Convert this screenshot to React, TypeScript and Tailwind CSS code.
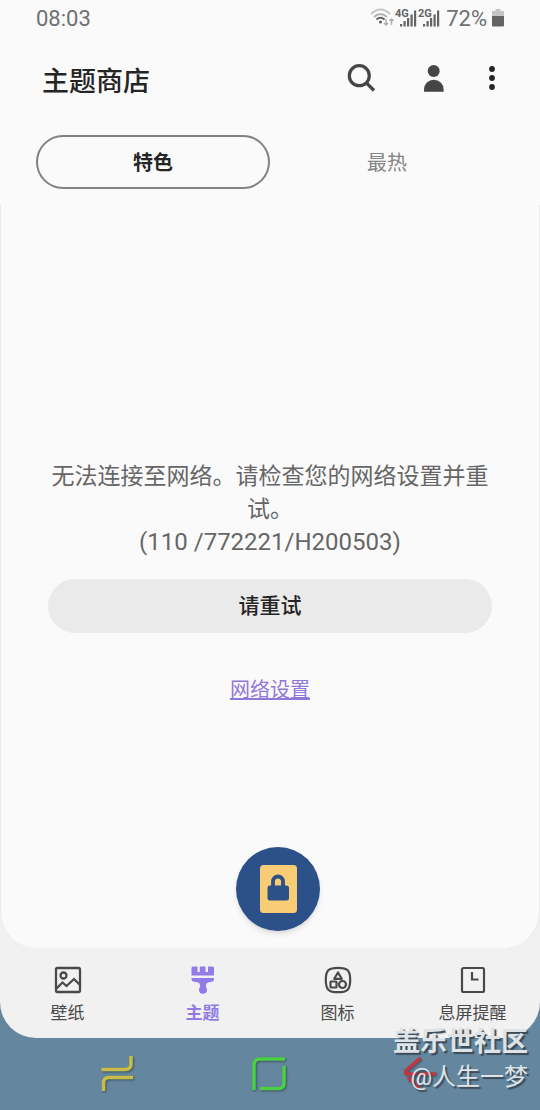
import { useState } from 'react'
import type { ReactNode } from 'react'
import clsx from 'clsx'

const tabs = ['特色', '最热']

function WifiIcon() {
    return (
        <svg viewBox="0 0 25 20" className="h-5 w-[25px]" fill="none" aria-hidden="true">
            <path d="M1 6Q10.500 -3 20 6" stroke="#c4c4c4" strokeWidth="2" />
            <path d="M4 9Q10.500 3 17 9" stroke="#b4b4b4" strokeWidth="2" />
            <path d="M6.500 11.500Q10.500 8 14.500 11.500" stroke="#5f5f5f" strokeWidth="2" />
            <circle cx="10.5" cy="14" r="1.5" fill="#5f5f5f" />
            <path d="M16 11v6M14 15l2 2 2-2M21.500 17v-6M19.500 13l2-2 2 2" stroke="#b0b0b0" strokeWidth="1.5" />
        </svg>
    )
}

function SignalIcon({ label }: { label: string }) {
    return (
        <svg viewBox="0 0 23 20" className="h-5 w-[23px]" fill="#646464" role="img" aria-label={label}>
            <path d="M5 16h2.200v2.500H5zM8.500 13h2.200v5.500H8.500zM12 10h2.200v8.500H12zM15.500 6.500h2.200v12h-2.200zM19 2.500h2.200v16H19z" />
            <text x="0" y="9" className="font-['Roboto',sans-serif] text-[11px] font-bold" stroke="#fafafa" strokeWidth="1" paintOrder="stroke">
                {label}
            </text>
        </svg>
    )
}

function BatteryIcon() {
    return (
        <svg viewBox="0 0 12 19" className="h-[19px] w-3" aria-hidden="true">
            <path d="M3.500 0h5v2H12v5.500H0V2h3.500z" fill="#c4c4c4" />
            <path d="M0 7h12v9.500a1 1 0 0 1-1 1H1a1 1 0 0 1-1-1z" fill="#646464" />
        </svg>
    )
}

function StatusBar() {
    return (
        <div className="flex h-9 items-center justify-between px-9 font-['Roboto',sans-serif] text-[22px] text-[#707070]">
            <span>08:03</span>
            <div className="flex items-center">
                <WifiIcon />
                <SignalIcon label="4G" />
                <SignalIcon label="2G" />
                <span className="mx-[5px]">72%</span>
                <BatteryIcon />
            </div>
        </div>
    )
}

function WallpaperIcon() {
    return (
        <svg viewBox="0 0 28 28" className="size-7" fill="none" stroke="currentColor" strokeWidth="2.3" aria-hidden="true">
            <rect x="2" y="2" width="24" height="24" rx="1.5" />
            <circle cx="9.5" cy="9.5" r="3" />
            <path d="M2.500 22.500l6-6 4 3.500 7.500-7 6 6" />
        </svg>
    )
}

function BrushIcon() {
    return (
        <svg viewBox="0 0 28 28" className="size-7" fill="currentColor" aria-hidden="true">
            <path d="M2.500 9.500V2Q2.500 .5 4 .5H8.500V6H10.800V.5H16.500V6H19V.5H23.500Q25 .5 25 2V9.500z" />
            <path d="M2.500 12H25V13.500Q25 15.500 23 15.800L19 16.500Q17 17 17 19V21Q18 22 18 23.800A4 4 0 0 1 10 23.800Q10 22 11 21V19Q11 17 9 16.500L5 15.800Q2.500 15.500 2.500 13.500z" />
        </svg>
    )
}

function ShapesIcon() {
    return (
        <svg viewBox="0 0 28 28" className="size-7" fill="none" stroke="currentColor" strokeWidth="2.2" aria-hidden="true">
            <path d="M14 1.800C23.500 1.800 26.200 4.500 26.200 14S23.500 26.200 14 26.200 1.800 23.500 1.800 14 4.500 1.800 14 1.800z" />
            <path d="M14 6.500L17.800 12.800H10.200z" strokeLinejoin="round" />
            <rect x="6.500" y="15.500" width="6" height="6" rx=".5" />
            <circle cx="18.500" cy="18.500" r="3.500" />
        </svg>
    )
}

function ClockIcon() {
    return (
        <svg viewBox="0 0 28 28" className="size-7" fill="none" stroke="currentColor" strokeWidth="2.2" aria-hidden="true">
            <rect x="3" y="2" width="22" height="24" rx="1.5" />
            <path d="M13 6v7.500h6.500" />
        </svg>
    )
}

const navItems: { label: string; icon: ReactNode }[] = [
    { label: '壁纸', icon: <WallpaperIcon /> },
    { label: '主题', icon: <BrushIcon /> },
    { label: '图标', icon: <ShapesIcon /> },
    { label: '息屏提醒', icon: <ClockIcon /> },
]

// 系统导航键
const systemKeys = [
    { label: '最近任务', color: 'text-[#c9bd45]', paths: ['M2.500 13.500H26Q32 13.500 32 8V0', 'M4.500 35V27Q4.500 21.500 10 21.500H34'] },
    { label: '主屏幕', color: 'text-[#4bd044]', paths: ['M3 34V9Q3 3 9 3H34', 'M9 32.500H28Q33 32.500 33 27V10'] },
    { label: '返回', color: 'text-[#c23640]', paths: ['M18.500 2L4 14.500Q2.500 18 6 18H34', 'M6 21.500L18 33'] },
]

export default function App() {
    const [activeTab, setActiveTab] = useState(0)
    const [activeNav, setActiveNav] = useState(1)

    return (
        <div className="relative flex min-h-screen flex-col bg-[#64879f] font-['Roboto','Noto_Sans_CJK_SC',sans-serif]">
            <div className="flex flex-1 flex-col overflow-hidden rounded-b-[36px] bg-[#f1f1f1]">
                <div className="bg-[#fafafa]">
                    <StatusBar />
                    <header className="flex h-[84px] items-center pr-9 pl-[42px] text-[#454545]">
                        <h1 className="flex-1 pt-2 text-[27px] leading-10 font-medium text-[#252525]">主题商店</h1>
                        <div className="flex gap-9">
                            <button type="button" aria-label="搜索" className="size-9">
                                <svg viewBox="0 0 36 36" fill="none" stroke="currentColor" strokeWidth="3.2">
                                    <circle cx="15.3" cy="15.7" r="10" />
                                    <path d="M22.500 23L30 30.500" />
                                </svg>
                            </button>
                            <button type="button" aria-label="账户" className="size-9">
                                <svg viewBox="0 0 36 36" fill="currentColor">
                                    <circle cx="17.7" cy="11" r="6" />
                                    <path d="M8 31.700V29.500A9.800 9.800 0 0 1 27.600 29.500V31.700z" />
                                </svg>
                            </button>
                        </div>
                        <button type="button" aria-label="更多选项" className="ml-7 h-9 w-6 text-[#252525]">
                            <svg viewBox="0 0 24 36" fill="currentColor">
                                <circle cx="12" cy="9" r="2.900" />
                                <circle cx="12" cy="18" r="2.900" />
                                <circle cx="12" cy="27" r="2.900" />
                            </svg>
                        </button>
                    </header>
                    <div role="tablist" className="grid grid-cols-2 px-9 pt-[15px] pb-4">
                        {tabs.map((tab, index) => (
                            <button
                                key={tab}
                                type="button"
                                role="tab"
                                aria-selected={index === activeTab}
                                onClick={() => setActiveTab(index)}
                                className={clsx(
                                    'h-[54px] rounded-full border-2 pt-0.5 text-[20px]',
                                    index === activeTab ? 'border-[#828282] font-bold text-[#252525]' : 'border-transparent text-[#858585]',
                                )}
                            >
                                {tab}
                            </button>
                        ))}
                    </div>
                </div>

                <main className="relative flex flex-1 flex-col items-center justify-center rounded-b-[36px] border-x border-[#eaeaea] bg-[#fafafa] px-[47px] pt-3">
                    <p className="text-center text-[23px] leading-[33px] text-[#666666]">
                        无法连接至网络。请检查您的网络设置并重试。
                        <span className="block text-[24px]">(110 /772221/H200503)</span>
                    </p>
                    <button type="button" className="mt-5 h-[54px] w-full rounded-full bg-[#eaeaea] pt-0.5 text-[21px] font-medium text-[#252525]">
                        请重试
                    </button>
                    <a href="#network" className="mt-[42px] text-[20px] leading-[30px] text-[#8f78d8] underline">
                        网络设置
                    </a>

                    <button
                        type="button"
                        aria-label="锁屏"
                        className="absolute bottom-[17px] left-1/2 -ml-[34px] size-[84px] rounded-full bg-[#2c5088] shadow-md"
                    >
                        <svg viewBox="0 0 84 84">
                            <rect x="24" y="18" width="37" height="48" rx="3.500" fill="#f8cc74" />
                            <rect x="31.500" y="38.500" width="21.500" height="15" rx="2.500" fill="#2c5088" />
                            <path d="M37 40V34.500a5 5 0 0 1 10 0V40" fill="none" stroke="#2c5088" strokeWidth="3.800" />
                        </svg>
                    </button>
                </main>

                <nav className="grid h-[90px] grid-cols-4">
                    {navItems.map((item, index) => (
                        <button
                            key={item.label}
                            type="button"
                            onClick={() => setActiveNav(index)}
                            className={clsx(
                                'flex flex-col items-center gap-[5px] pt-[18px] text-[17px] leading-7',
                                index === activeNav ? 'font-bold text-[#917be8]' : 'text-[#4a4a4a]',
                            )}
                        >
                            {item.icon}
                            {item.label}
                        </button>
                    ))}
                </nav>
            </div>

            <div className="flex h-[72px] items-center justify-between pr-[102px] pl-[99px]">
                {systemKeys.map((key) => (
                    <button key={key.label} type="button" aria-label={key.label} className={clsx('size-9 drop-shadow-[1px_1px_1px_#00000066]', key.color)}>
                        <svg viewBox="0 0 36 36" fill="none" stroke="currentColor" strokeWidth="3.5" className="overflow-visible">
                            {key.paths.map((d) => (
                                <path key={d} d={d} />
                            ))}
                        </svg>
                    </button>
                ))}
            </div>

            {/* 社区水印 */}
            <div className="pointer-events-none absolute right-3 bottom-[15px] text-right text-[#dde3e6] text-shadow-[2px_2px_1px_#3a4a58]">
                <div className="text-[27px] leading-[35px] font-bold">盖乐世社区</div>
                <div className="text-[24px] leading-[35px]">@人生一梦</div>
            </div>
        </div>
    )
}
